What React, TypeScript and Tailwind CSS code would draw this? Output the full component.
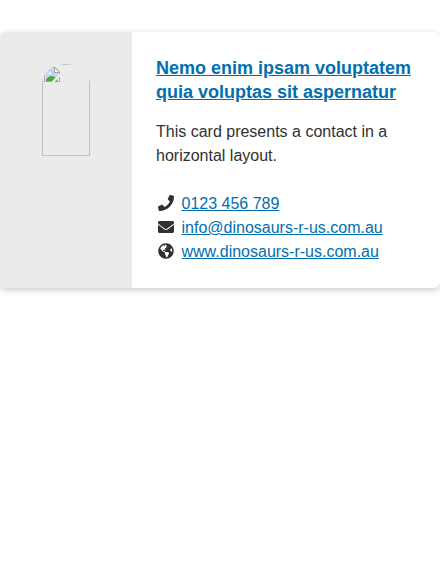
import React from "react";
import { FaPhone, FaEnvelope, FaGlobeAmericas } from "react-icons/fa";

const contacts = [
  { Icon: FaPhone, label: "0123 456 789" },
  { Icon: FaEnvelope, label: "info@dinosaurs-r-us.com.au" },
  { Icon: FaGlobeAmericas, label: "www.dinosaurs-r-us.com.au" },
];

function MissingImage() {
  return (
    <div className="h-[92px] w-12 overflow-hidden [border-radius:24px_24px_0_0/20px_20px_0_0]">
      <div className="h-full w-full border border-[#c0c0c0] p-px">
        <svg width="16" height="16" viewBox="0 0 16 16">
          <path d="M0 1h11l5 5v10H0z" fill="#a3a3a3" />
          <path d="M1 2h9v5h5v8H1z" fill="#fff" />
          <path d="M1.5 2.5H10v4.5h4.5v7H1.5z" fill="#c3d4f8" />
          <path d="M3 7.5h1.5l1-1.5 1.5 1v1H3z" fill="#f4f7ff" />
          <path d="M2 15v-1.5Q4 10 7.5 10t6 4v1z" fill="#4bab30" />
          <path d="M11 2.5L14.5 6H11z" fill="#fff" />
          <path d="M16 7.5v3L10.5 16H7.5L10 13z" fill="#ebebeb" />
        </svg>
      </div>
    </div>
  );
}

export default function App() {
  return (
    <main className="min-h-[570px] bg-white pt-8 font-['Liberation_Sans',Arial,sans-serif] text-base leading-6 text-[#313131]">
      <article className="flex h-64 overflow-hidden rounded-md bg-white shadow-[0_2px_6px_rgba(0,0,0,0.22)]">
        <div className="flex w-[132px] shrink-0 items-start justify-center bg-[#ebebeb] pt-8">
          <MissingImage />
        </div>
        <div className="flex-1 pt-6 pl-6">
          <h3 className="text-[18px] leading-6 font-bold">
            <a href="#" className="text-[#0070b0] underline">
              Nemo enim ipsam voluptatem
              <br />
              quia voluptas sit aspernatur
            </a>
          </h3>
          <p className="mt-4">
            This card presents a contact in a<br />
            horizontal layout.
          </p>
          <ul className="mt-6">
            {contacts.map(({ Icon, label }) => (
              <li key={label} className="flex h-6 items-center">
                <span className="mr-[5.5px] flex w-5 justify-center pb-0.5">
                  <Icon size={16} />
                </span>
                <a href="#" className="text-[#0070b0] underline">
                  {label}
                </a>
              </li>
            ))}
          </ul>
        </div>
      </article>
    </main>
  );
}
